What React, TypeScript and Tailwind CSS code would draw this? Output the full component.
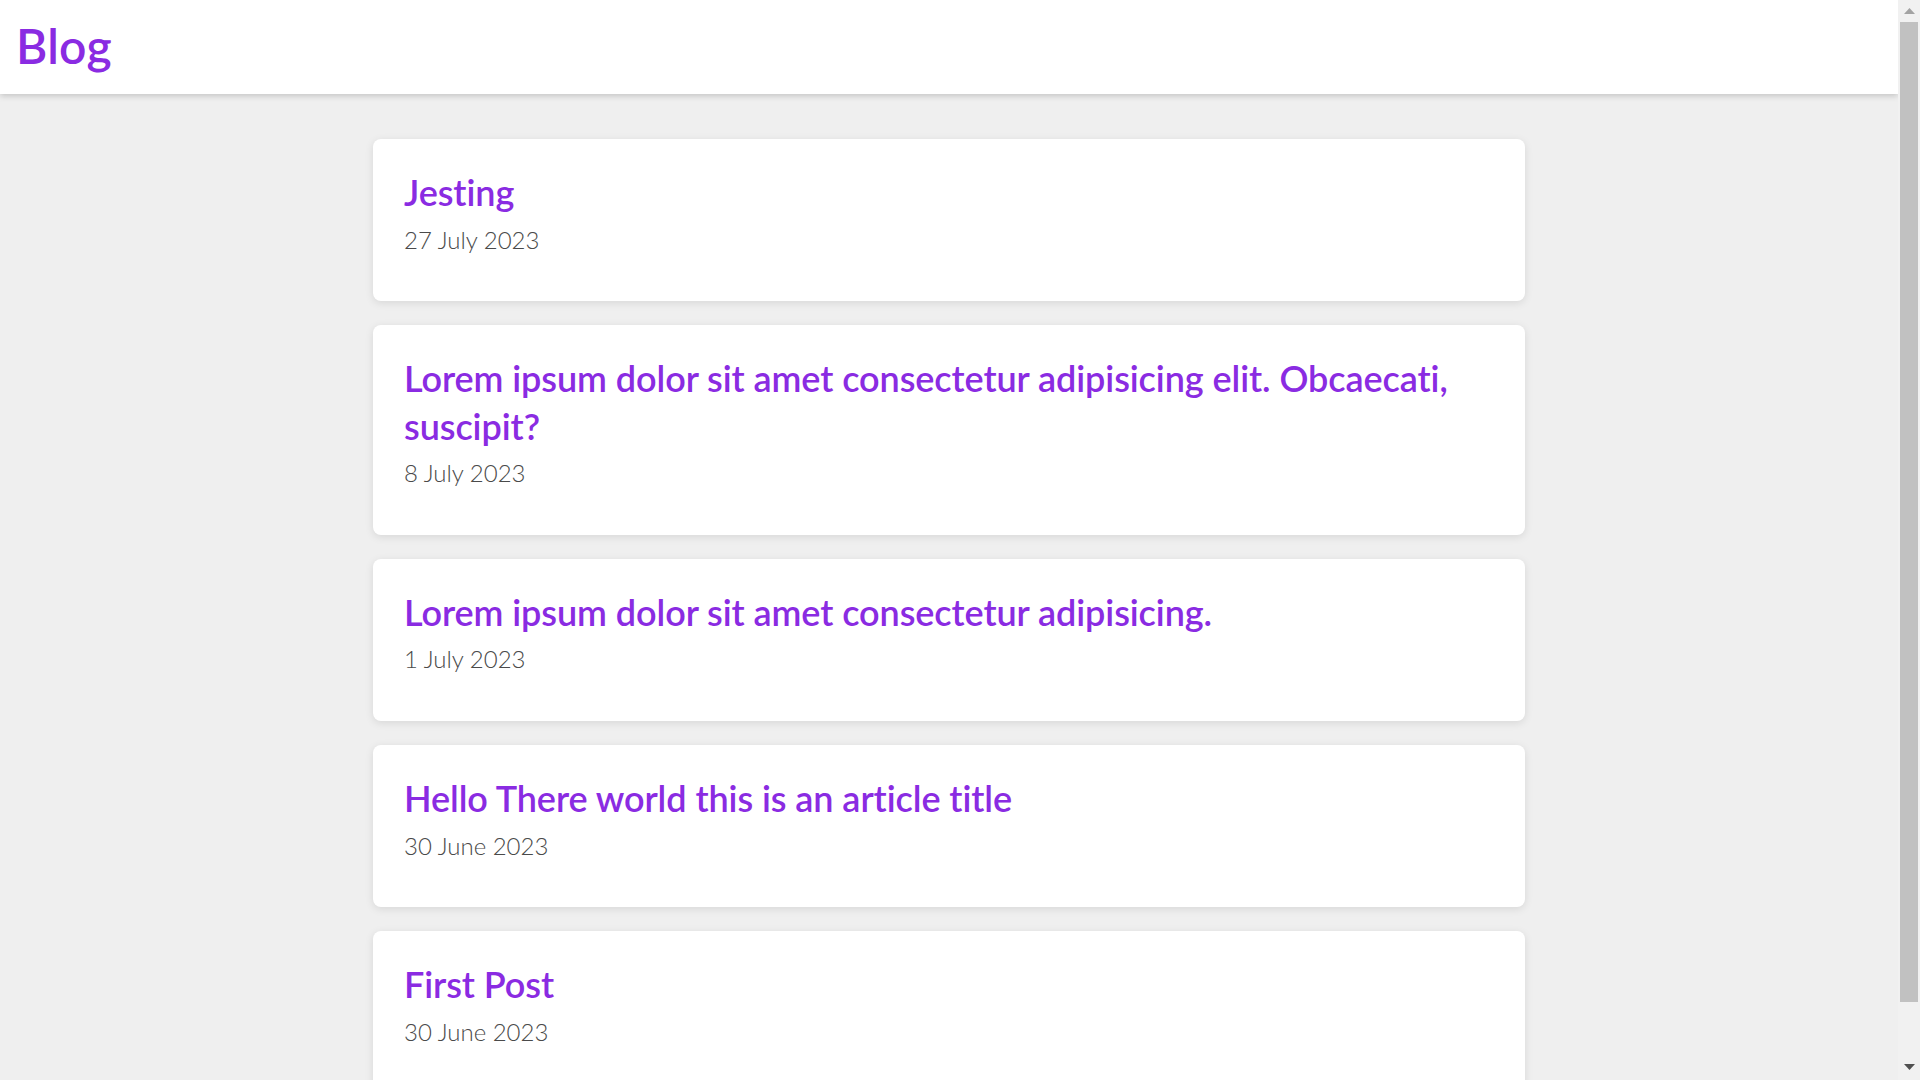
const posts = [
  { title: "Jesting", date: "27 July 2023" },
  { title: "Lorem ipsum dolor sit amet consectetur adipisicing elit. Obcaecati, suscipit?", date: "8 July 2023" },
  { title: "Lorem ipsum dolor sit amet consectetur adipisicing.", date: "1 July 2023" },
  { title: "Hello There world this is an article title", date: "30 June 2023" },
  { title: "First Post", date: "30 June 2023" },
];

function Scrollbar() {
  return (
    <div className="fixed top-0 right-0 bottom-0 flex w-[22px] flex-col items-center bg-[#f1f1f1]">
      <div className="flex h-[22px] w-full items-center justify-center">
        <svg width="11" height="6" viewBox="0 0 11 6">
          <path d="M5.5 0 L11 6 L0 6 Z" fill="#a3a3a3" />
        </svg>
      </div>
      <div className="ml-[2px] w-[18px] flex-1 self-start bg-[#c1c1c1] mb-[56px]" />
      <div className="flex h-[22px] w-full items-center justify-center pb-[4px]">
        <svg width="11" height="6" viewBox="0 0 11 6">
          <path d="M0 0 L11 0 L5.5 6 Z" fill="#505050" />
        </svg>
      </div>
    </div>
  );
}

export default function App() {
  return (
    <div className="min-h-screen bg-[#efefef] font-['Lato',sans-serif]">
      <div className="mr-[22px]">
        {/* header */}
        <header className="h-[94px] bg-white px-4 pt-[14px] shadow-[0_2px_6px_rgba(0,0,0,0.18)]">
          <h1 className="text-[48px] font-semibold leading-[1.32] tracking-[0.005em] text-[#8a2be2]">Blog</h1>
        </header>

        {/* post list */}
        <main className="mx-auto flex max-w-6xl flex-col gap-6 pt-[45px] pb-[56px]">
          {posts.map((post) => (
            <article
              key={post.date + post.title}
              className="rounded-lg bg-white px-[31px] pt-[30px] pb-[46px] shadow-[0_2px_8px_rgba(0,0,0,0.1)]"
            >
              <h2 className="text-[36px] font-semibold leading-[1.32] tracking-[-0.002em] text-[#8a2be2]">{post.title}</h2>
              <p className="mt-[7px] text-[24px] font-light leading-[1.32] text-[#4a4a4a]">{post.date}</p>
            </article>
          ))}
        </main>
      </div>
      <Scrollbar />
    </div>
  );
}
